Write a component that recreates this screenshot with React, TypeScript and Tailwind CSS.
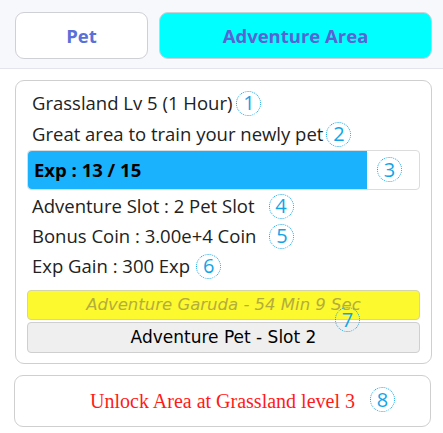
import React from "react";

const sans = "font-['Segoe_UI','Open_Sans','Noto_Sans',sans-serif]";
const comic = "font-['Comic_Sans_MS','DejaVu_Sans',sans-serif]";

function Num({ n, className = "" }: { n: number; className?: string }) {
  return (
    <span
      className={`inline-flex h-[25px] w-[25px] shrink-0 items-center justify-center rounded-full border border-dotted border-[#14a4e6] text-[20px] font-normal not-italic leading-none text-[#14a4e6] ${sans} ${className}`}
    >
      {n}
    </span>
  );
}

export default function App() {
  const exp = 13;
  const maxExp = 15;

  return (
    <div className={`min-h-screen bg-white text-[#222] ${sans}`}>
      <div className="flex gap-[11px] border-b border-[#e3e4ee] bg-[#f7f8fc] pb-[9px] pl-[15px] pr-[11px] pt-[12px]">
        <button className="h-[47px] w-[133px] rounded-[9px] border border-[#cfcfd6] bg-white text-[18.5px] font-bold text-[#5a70d8]">
          Pet
        </button>
        <button className="h-[47px] flex-1 rounded-[9px] border border-[#cfcfd6] bg-[#00ffff] text-[18.5px] font-bold text-[#5a62d4]">
          Adventure Area
        </button>
      </div>

      <div className="ml-[15px] mr-[11px] mt-[11px] rounded-[9px] border border-[#cfcfcf] px-[11px] pb-[10px] pt-[9px]">
        <div className="flex items-center gap-[4px] pl-[5px] text-[18.5px] leading-[26px]">
          <span>Grassland Lv 5 (1 Hour)</span>
          <Num n={1} />
        </div>
        <div className="mt-[5px] flex items-center gap-[3px] pl-[5px] text-[18.5px] leading-[26px]">
          <span>Great area to train your newly pet</span>
          <Num n={2} />
        </div>
        <div className="relative mt-[3px] h-[40px] rounded-[4px] border border-[#dcdcdc]">
          <div
            className="flex h-full items-center rounded-l-[4px] bg-[#1ab2fc] pl-[6px] text-[18.5px] font-bold text-black"
            style={{ width: `${(exp / maxExp) * 100}%` }}
          >
            Exp : {exp} / {maxExp}
          </div>
          <Num n={3} className="absolute right-[17px] top-[6px]" />
        </div>
        <div className="mt-[2px] flex items-center pl-[5px] text-[18.5px] leading-[28px]">
          <span>Adventure Slot : 2 Pet Slot</span>
          <Num n={4} className="ml-[14px]" />
        </div>
        <div className="mt-[2px] flex items-center pl-[5px] text-[18.5px] leading-[28px]">
          <span>Bonus Coin : 3.00e+4 Coin</span>
          <Num n={5} className="ml-[13px]" />
        </div>
        <div className="mt-[2px] flex items-center gap-[6px] pl-[5px] text-[18.5px] leading-[28px]">
          <span>Exp Gain : 300 Exp</span>
          <Num n={6} />
        </div>

        <div className="relative mt-[10px] flex flex-col gap-[2px]">
          <button
            className={`h-[30px] w-full rounded-[4px] border border-[#d4d4aa] bg-[#fdf92f] text-[16.5px] italic text-[#b3ad3c] ${comic}`}
          >
            Adventure Garuda - 54 Min 9 Sec
          </button>
          <button
            className={`h-[31px] w-full rounded-[4px] border border-[#cfcfcf] bg-[#efefef] text-[17px] text-black ${comic}`}
          >
            Adventure Pet - Slot 2
          </button>
          <Num n={7} className="absolute left-[308px] top-[17px]" />
        </div>
      </div>

      <div className="ml-[14px] mr-[12px] mt-[11px] flex h-[52px] items-center justify-center rounded-[9px] border border-[#cfcfcf]">
        <span className="relative font-['Liberation_Serif',serif] text-[20px] text-[#ff1a1a]">
          Unlock Area at Grassland level 3
          <Num n={8} className="absolute left-full top-[1px] ml-[15px]" />
        </span>
      </div>
    </div>
  );
}
